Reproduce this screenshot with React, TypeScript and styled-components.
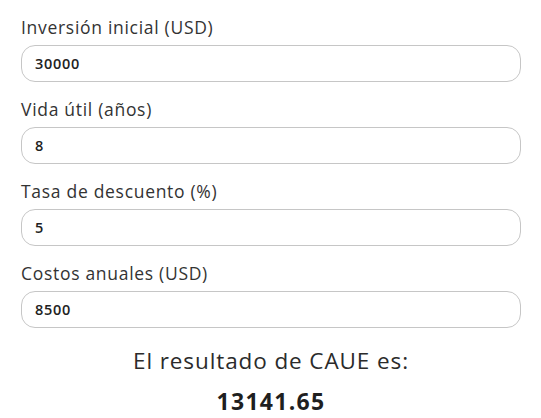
import styled, { createGlobalStyle } from "styled-components";

const GlobalStyle = createGlobalStyle`
  body {
    margin: 0;
    background: #ffffff;
    font-family: "Open Sans", Lato, sans-serif;
    color: #2b2b2b;
  }
`;

const Form = styled.div`
  display: flex;
  flex-direction: column;
  padding: 14px 20px 0 21px;
`;

const Field = styled.div`
  display: flex;
  flex-direction: column;
  gap: 5px;
  margin-bottom: 14px;
`;

const Label = styled.label`
  font-size: 17.5px;
  line-height: 26px;
  letter-spacing: 0.7px;
  color: #333333;
`;

const Input = styled.input`
  box-sizing: border-box;
  width: 100%;
  height: 37px;
  padding: 0 13px;
  border: 1px solid #c6c6c6;
  border-radius: 14px;
  background: #ffffff;
  font-family: inherit;
  font-size: 14.5px;
  font-weight: 600;
  letter-spacing: 0.7px;
  color: #222222;
  outline: none;
`;

const Result = styled.div`
  display: flex;
  flex-direction: column;
  align-items: center;
  gap: 10px;
  margin-top: 4px;
`;

const ResultLabel = styled.div`
  font-size: 22.5px;
  line-height: 30px;
  letter-spacing: 0.9px;
  color: #2b2b2b;
`;

const ResultValue = styled.div`
  font-size: 23px;
  line-height: 30px;
  font-weight: 700;
  letter-spacing: 1.3px;
  color: #1f1f1f;
`;

const fields = [
  { label: "Inversión inicial (USD)", value: "30000" },
  { label: "Vida útil (años)", value: "8" },
  { label: "Tasa de descuento (%)", value: "5" },
  { label: "Costos anuales (USD)", value: "8500" },
];

export default function App() {
  return (
    <>
      <GlobalStyle />
      <Form>
        {fields.map((f) => (
          <Field key={f.label}>
            <Label>{f.label}</Label>
            <Input type="text" defaultValue={f.value} />
          </Field>
        ))}
        <Result>
          <ResultLabel>El resultado de CAUE es:</ResultLabel>
          <ResultValue>13141.65</ResultValue>
        </Result>
      </Form>
    </>
  );
}
